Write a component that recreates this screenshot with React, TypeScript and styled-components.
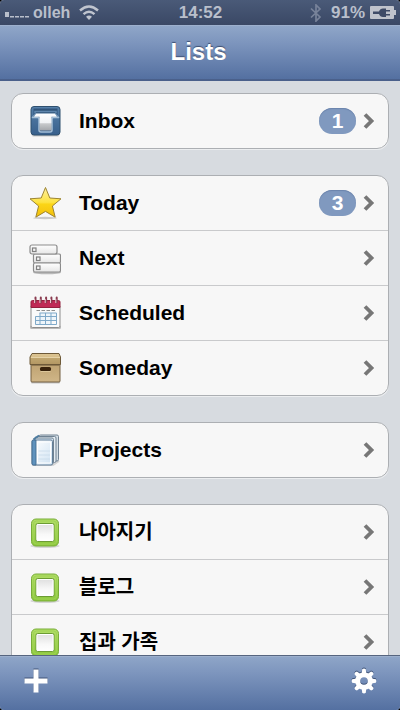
import React from "react";
import styled, { createGlobalStyle, css } from "styled-components";

const GlobalStyle = createGlobalStyle`
  *, *::before, *::after { box-sizing: border-box; }
  body {
    margin: 0;
    background: #000;
    font-family: "Liberation Sans", Arial, "Noto Sans CJK KR", sans-serif;
    font-weight: 700;
  }
`;

const barGradient = "linear-gradient(#8fa6c8, #7e96be 30%, #5470a1)";

const Screen = styled.div`
  display: flex;
  flex-direction: column;
  height: 100vh;
  overflow: hidden;
  border-radius: 4px;
  background: #d7dbe0;
`;

const StatusBar = styled.div`
  display: grid;
  grid-template-columns: 1fr auto 1fr;
  align-items: center;
  flex: none;
  height: 25px;
  padding: 0 4px 0 5px;
  background: linear-gradient(#4a5a78, #3a4865);
  color: #b9bfcb;
  font-size: 17px;
  line-height: 25px;
`;

const StatusGroup = styled.div<{ $end?: boolean }>`
  display: flex;
  align-items: center;
  justify-content: ${(p) => (p.$end ? "flex-end" : "flex-start")};
  gap: ${(p) => (p.$end ? "5px" : "0")};
`;

const Carrier = styled.span`
  margin: 0 9px 0 4px;
  font-size: 16px;
`;

const Bluetooth = styled.svg`
  display: block;
  margin-right: 4px;
  color: #78839a;
`;

const Glyph = styled.svg`
  display: block;
  flex: none;
`;

const Header = styled.header`
  display: flex;
  align-items: center;
  justify-content: center;
  flex: none;
  height: 56px;
  padding-bottom: 2px;
  border-top: 1px solid #9db0cd;
  border-bottom: 2px solid #4a608b;
  background: ${barGradient};
`;

const Title = styled.h1`
  margin: 0;
  padding-right: 3px;
  color: #fff;
  font-size: 24px;
  line-height: 28px;
  text-shadow: 0 -1px 1px #3d4f73;
`;

const Content = styled.main`
  display: flex;
  flex: 1;
  flex-direction: column;
  gap: 26px;
  min-height: 0;
  overflow: hidden;
  padding: 12px 11px 0;
`;

const Card = styled.ul`
  flex: none;
  margin: 0;
  padding: 0;
  overflow: hidden;
  list-style: none;
  border: 1px solid #acafb3;
  border-radius: 12px;
  background: #f7f7f7;
  box-shadow: 0 1px 0 #eceef0;
`;

const Item = styled.li`
  & + & {
    border-top: 1px solid #c9cacc;
  }
`;

const RowLink = styled.a`
  display: flex;
  align-items: center;
  height: 54px;
  padding: 0 13px 0 17px;
  color: #000;
  text-decoration: none;
`;

const Label = styled.span<{ $korean?: boolean }>`
  flex: 1;
  margin-left: 18px;
  font-size: 21px;
  line-height: 28px;
  ${(p) =>
    p.$korean &&
    css`
      font-size: 20px;
    `}
`;

const Badge = styled.span`
  width: 37px;
  height: 26px;
  margin-right: 7px;
  border-radius: 13px;
  background: #8099bf;
  box-shadow: inset 0 1px 1px #6b84ac;
  color: #fff;
  font-size: 21px;
  line-height: 26px;
  text-align: center;
`;

const Toolbar = styled.footer`
  display: flex;
  align-items: center;
  justify-content: space-between;
  flex: none;
  height: 55px;
  padding: 0 20px 4px;
  border-top: 1px solid #56657f;
  background: ${barGradient};
  box-shadow: inset 0 1px 0 #9db0cd;
`;

const ToolButton = styled.button`
  display: grid;
  place-items: center;
  width: 32px;
  height: 44px;
  padding: 0;
  border: 0;
  background: none;
  color: #fff;
  filter: drop-shadow(0 -1px 0 #3f5378);
`;

const InboxIcon = () => (
  <Glyph width="32" height="34" viewBox="0 0 32 34" aria-hidden="true">
    <defs>
      <linearGradient id="inboxPaper" x1="0" y1="0" x2="0" y2="1">
        <stop offset="0" stopColor="#fff" />
        <stop offset=".55" stopColor="#f0f2f5" />
        <stop offset=".6" stopColor="#c8cacc" />
        <stop offset="1" stopColor="#a3a6ab" />
      </linearGradient>
      <linearGradient id="inboxTray" x1="0" y1="0" x2="0" y2="1">
        <stop offset="0" stopColor="#5680aa" />
        <stop offset="1" stopColor="#38608c" />
      </linearGradient>
    </defs>
    <rect x="3" y="30" width="27" height="2.4" rx="1.2" fill="#000" opacity=".18" />
    <rect x="2" y="2.500" width="29" height="28.500" rx="3" fill="url(#inboxTray)" stroke="#2f506f" />
    <path d="M4.500 12V4.500H28.500V12L26.500 9.500H6.500Z" fill="#31547a" />
    <path d="M6 9.500V7.500H27V9.500" fill="none" stroke="#5f86ad" strokeWidth="1.500" />
    <path d="M3 13.500H8.500Q10 13.500 10 15V26Q10 28 12 28H21Q23 28 23 26V15Q23 13.500 24.500 13.500H30" fill="none" stroke="#a4bfd7" strokeWidth="1.500" />
    <path d="M7 9.500H26L28 12.700H22.500V26.500H10.500V12.700H5Z" fill="url(#inboxPaper)" />
    <path d="M3 13.500L7 9.500M30 13.500L26 9.500" stroke="#9ab6cf" />
  </Glyph>
);

const StarIcon = () => (
  <Glyph width="32" height="34" viewBox="0 0 32 34" aria-hidden="true">
    <defs>
      <linearGradient id="starFill" x1="0" y1="0" x2="0" y2="1">
        <stop offset="0" stopColor="#fff0a0" />
        <stop offset=".5" stopColor="#fde341" />
        <stop offset=".56" stopColor="#fbd516" />
        <stop offset="1" stopColor="#f3bf0c" />
      </linearGradient>
    </defs>
    <ellipse cx="16" cy="32" rx="12" ry="1.200" fill="#000" opacity=".18" />
    <path d="M16.500 1.500L20.800 12L32 12.800L23.400 20L26.200 31.200L16.500 25.400L6.800 31.200L9.600 20L1 12.800L12.200 12Z" fill="url(#starFill)" stroke="#9c8432" strokeWidth="1" strokeLinejoin="round" />
  </Glyph>
);

const NextIcon = () => (
  <Glyph width="32" height="34" viewBox="0 0 32 34" aria-hidden="true">
    <defs>
      <linearGradient id="nextBox" x1="0" y1="0" x2="0" y2="1">
        <stop offset="0" stopColor="#fff" />
        <stop offset="1" stopColor="#e6e6e6" />
      </linearGradient>
    </defs>
    <ellipse cx="18" cy="31.500" rx="14" ry="1.800" fill="#000" opacity=".25" />
    <g fill="url(#nextBox)" stroke="#8b8b8b" strokeWidth="1.200">
      <rect x="4.500" y="13" width="27" height="9" rx="1.500" />
      <rect x="4.500" y="22" width="27" height="9" rx="1.500" />
      <rect x="1" y="4" width="27" height="9" rx="2" />
    </g>
    <g fill="#f4f4f4" stroke="#808080" strokeWidth="1.200">
      <rect x="3.500" y="7" width="3.500" height="3.500" />
      <rect x="7.500" y="16" width="3.500" height="3.500" />
      <rect x="7.500" y="25" width="3.500" height="3.500" />
    </g>
  </Glyph>
);

const CalendarIcon = () => (
  <Glyph width="32" height="34" viewBox="0 0 32 34" aria-hidden="true">
    <rect x="1" y="29.500" width="31" height="3.500" rx="1.500" fill="#000" opacity=".25" />
    <path d="M2 10H31V30Q31 31.500 29.500 31.500H3.500Q2 31.500 2 30Z" fill="#fafafa" stroke="#8d8d8d" />
    <path d="M2 6Q2 4.500 3.500 4.500H29.500Q31 4.500 31 6V11.500H2Z" fill="#c02a56" stroke="#94213f" />
    <path d="M6.500 1.500V6.500M11.800 1.500V6.500M17.100 1.500V6.500M22.400 1.500V6.500M27.700 1.500V6.500" stroke="#8a3c50" strokeWidth="2" strokeLinecap="round" />
    <path d="M5.600 3V7M10.900 3V7M16.200 3V7M21.500 3V7M26.800 3V7" stroke="#e9c6cf" strokeWidth="1" />
    <path d="M7.500 14.500H26" stroke="#8f8f8f" strokeWidth="1.200" strokeDasharray="3.500 1.500" />
    <path d="M10.500 17H27.500V24.500H22.500V28.500H6.500V20.500H10.500Z" fill="#eef5fa" />
    <path d="M10.500 17H27.500M6.500 20.500H27.500M6.500 24.500H27.500M6.500 28.500H22.500M6.500 20.500V28.500M11 17V28.500M16.500 17V28.500M22 17V28.500M27.500 17V28.500M22 28.500H27.500" stroke="#7fa9c9" fill="none" />
  </Glyph>
);

const BoxIcon = () => (
  <Glyph width="32" height="34" viewBox="0 0 32 34" aria-hidden="true">
    <defs>
      <linearGradient id="boxLid" x1="0" y1="0" x2="0" y2="1">
        <stop offset="0" stopColor="#dcc594" />
        <stop offset=".35" stopColor="#d6bd88" />
        <stop offset=".4" stopColor="#c0a66f" />
        <stop offset="1" stopColor="#b39763" />
      </linearGradient>
      <linearGradient id="boxBody" x1="0" y1="0" x2="0" y2="1">
        <stop offset="0" stopColor="#bda170" />
        <stop offset="1" stopColor="#d0b688" />
      </linearGradient>
    </defs>
    <rect x="2" y="30" width="29" height="2.500" rx="1" fill="#000" opacity=".2" />
    <rect x="2" y="12" width="29" height="19" rx="1" fill="url(#boxBody)" stroke="#756142" />
    <path d="M3 2.500H30L31.500 6V13.500H1V6Z" fill="url(#boxLid)" stroke="#6e5a39" strokeLinejoin="round" />
    <path d="M2 6.500H31" stroke="#e6d3a8" />
    <path d="M2.500 14.500H30.500" stroke="#806b48" opacity=".7" />
    <rect x="11" y="16" width="11" height="4" rx="1.500" fill="#39230c" />
    <path d="M11.500 20.500H21.500" stroke="#e2cda2" strokeWidth=".8" />
  </Glyph>
);

const ProjectsIcon = () => (
  <Glyph width="32" height="34" viewBox="0 0 32 34" aria-hidden="true">
    <defs>
      <linearGradient id="page" x1="0" y1="0" x2="1" y2="1">
        <stop offset="0" stopColor="#fff" />
        <stop offset="1" stopColor="#cfe2f2" />
      </linearGradient>
    </defs>
    <path d="M3 32H24L30 28" stroke="#000" strokeWidth="2" opacity=".14" fill="none" />
    <g stroke="#708292" strokeWidth="1">
      <rect x="10" y="2" width="19.500" height="26" rx="1.500" fill="#d2dde5" />
      <rect x="8" y="3.500" width="19" height="26" rx="1.500" fill="#e5edf3" />
      <rect x="5.500" y="5" width="19" height="26" rx="1.500" fill="#d5e4ef" />
      <rect x="3" y="7" width="20.500" height="25" rx="1.500" fill="url(#page)" stroke="#637f98" />
    </g>
    <path d="M3 8.500Q3 7 4.500 7H7V32H4.500Q3 32 3 30.500Z" fill="#5f92bd" stroke="#3f678b" strokeWidth=".8" />
    <path d="M4.500 6.500L7.500 4M7 4.500L10 2.500" stroke="#4d7b9f" strokeWidth="1.800" />
    <path d="M8.500 9H21.500V30H8.500Z" fill="none" stroke="#fff" />
    <path d="M9.500 18H21M9.500 22H21M9.500 26H21" stroke="#c8daea" strokeWidth=".8" />
  </Glyph>
);

const AreaIcon = () => (
  <Glyph width="32" height="34" viewBox="0 0 32 34" aria-hidden="true">
    <defs>
      <linearGradient id="areaFrame" x1="0" y1="0" x2="0" y2="1">
        <stop offset="0" stopColor="#b2df68" />
        <stop offset="1" stopColor="#8cc83c" />
      </linearGradient>
      <linearGradient id="areaInner" x1="0" y1="0" x2="0" y2="1">
        <stop offset="0" stopColor="#dedede" />
        <stop offset=".6" stopColor="#f8f8f8" />
        <stop offset="1" stopColor="#fff" />
      </linearGradient>
    </defs>
    <ellipse cx="16" cy="31" rx="14.500" ry="2" fill="#000" opacity=".14" />
    <rect x="2.500" y="4" width="27" height="27" rx="4.500" fill="url(#areaFrame)" stroke="#78ad38" />
    <rect x="4.500" y="6" width="23" height="23" rx="3" fill="none" stroke="#9fd155" />
    <rect x="7" y="8.500" width="18" height="18" rx="1.500" fill="url(#areaInner)" stroke="#6c9c34" />
    <rect x="8" y="9.500" width="16" height="16" rx="1" fill="none" stroke="#fff" />
  </Glyph>
);

const Chevron = () => (
  <Glyph width="12" height="16" viewBox="0 0 12 16" aria-hidden="true">
    <path d="M2 1.500L8.500 8L2 14.500" fill="none" stroke="#777" strokeWidth="3.800" />
  </Glyph>
);

type Entry = {
  id: string;
  label: string;
  Icon: () => React.ReactElement;
  count?: number;
  korean?: boolean;
};

const sections: Entry[][] = [
  [{ id: "inbox", label: "Inbox", Icon: InboxIcon, count: 1 }],
  [
    { id: "today", label: "Today", Icon: StarIcon, count: 3 },
    { id: "next", label: "Next", Icon: NextIcon },
    { id: "scheduled", label: "Scheduled", Icon: CalendarIcon },
    { id: "someday", label: "Someday", Icon: BoxIcon },
  ],
  [{ id: "projects", label: "Projects", Icon: ProjectsIcon }],
  [
    { id: "improve", label: "나아지기", Icon: AreaIcon, korean: true },
    { id: "blog", label: "블로그", Icon: AreaIcon, korean: true },
    { id: "home-family", label: "집과 가족", Icon: AreaIcon, korean: true },
  ],
];

const gearTeeth = [0, 45, 90, 135, 180, 225, 270, 315];

export default function App() {
  return (
    <>
      <GlobalStyle />
      <Screen>
        <StatusBar>
          <StatusGroup>
            <Glyph width="24" height="14" viewBox="0 0 24 14" role="img" aria-label="Signal strength">
              <path d="M0 6H4V11H0ZM5 10H9V11.500H5ZM10 10H14V11.500H10ZM15 10H19V11.500H15ZM20 10H24V11.500H20Z" fill="#b9bfcb" />
            </Glyph>
            <Carrier>olleh</Carrier>
            <Glyph width="20" height="15" viewBox="0 0 20 15" role="img" aria-label="Wi-Fi">
              <g fill="none" stroke="#c0c5cf" strokeWidth="2.400">
                <path d="M1 5.500Q10 -2.500 19 5.500" />
                <path d="M4.500 9.200Q10 4.400 15.500 9.200" />
              </g>
              <path d="M7 11.800Q10 9 13 11.800L10 15Z" fill="#c0c5cf" />
            </Glyph>
          </StatusGroup>
          <span>14:52</span>
          <StatusGroup $end>
            <Bluetooth width="12" height="18" viewBox="0 0 12 18" role="img" aria-label="Bluetooth">
              <path d="M1 4.500L10 13L6 17V1L10 5L1 13.500" fill="none" stroke="currentColor" strokeWidth="1.700" />
            </Bluetooth>
            <span>91%</span>
            <Glyph width="26" height="13" viewBox="0 0 26 13" role="img" aria-label="Battery charging">
              <path d="M1 0H23Q24 0 24 1V4H26V9H24V12Q24 13 23 13H1Q0 13 0 12V1Q0 0 1 0Z" fill="#bfc3cc" />
              <path d="M3 5.500H9Q10 2.500 13 2.500H16V4H20V5.500H16V8H20V9.500H16V11H13Q10 11 9 8H3Z" fill="#3e4b67" />
            </Glyph>
          </StatusGroup>
        </StatusBar>
        <Header>
          <Title>Lists</Title>
        </Header>
        <Content>
          {sections.map((entries) => (
            <Card key={entries[0].id}>
              {entries.map(({ id, label, Icon, count, korean }) => (
                <Item key={id}>
                  <RowLink href={`#${id}`}>
                    <Icon />
                    <Label $korean={korean} lang={korean ? "ko" : "en"}>
                      {label}
                    </Label>
                    {count !== undefined && <Badge>{count}</Badge>}
                    <Chevron />
                  </RowLink>
                </Item>
              ))}
            </Card>
          ))}
        </Content>
        <Toolbar>
          <ToolButton type="button" aria-label="Add">
            <Glyph width="24" height="24" viewBox="0 0 24 24" aria-hidden="true">
              <path d="M9.500 .5H14.500V9.500H23.500V14.500H14.500V23.500H9.500V14.500H.5V9.500H9.500Z" fill="currentColor" />
            </Glyph>
          </ToolButton>
          <ToolButton type="button" aria-label="Settings">
            <Glyph width="26" height="26" viewBox="0 0 26 26" aria-hidden="true">
              {gearTeeth.map((angle) => (
                <path key={angle} d="M10.600 6L11.200 1.200Q13 0 14.800 1.200L15.400 6Z" fill="currentColor" transform={`rotate(${angle} 13 13)`} />
              ))}
              <circle cx="13" cy="13" r="6.300" fill="none" stroke="currentColor" strokeWidth="5" />
            </Glyph>
          </ToolButton>
        </Toolbar>
      </Screen>
    </>
  );
}
